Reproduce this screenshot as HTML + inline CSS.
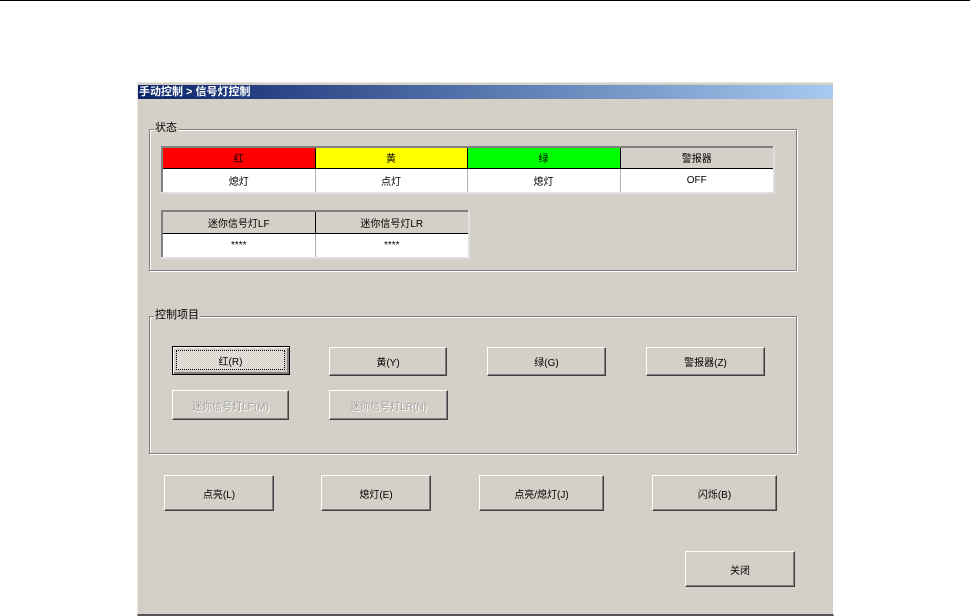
<!DOCTYPE html>
<html><head><meta charset="utf-8"><style>
*{margin:0;padding:0;box-sizing:border-box}
body{width:970px;height:616px;background:#fff;position:relative;overflow:hidden;font-family:"Liberation Sans","WenQuanYi Zen Hei","Noto Sans CJK SC",sans-serif;font-size:11px;color:#000}
.abs{position:absolute}
#topline{left:0;top:0;width:970px;height:1px;background:#000}
#win{left:137px;top:82px;width:697px;height:534px;background:#d4d0c8;border-top:1px solid #e8e6e0;border-left:1px solid #e8e6e0;border-right:1px solid #fff;border-bottom:2px solid #555}
#title{left:138px;top:85px;width:695px;height:14px;background:linear-gradient(90deg,#0a246a,#a6caf0);color:#fff;font-weight:bold;font-size:11px;line-height:14px;padding-left:1px}
.grp{border:1px solid #808080;box-shadow:1px 1px 0 #fff inset,1px 1px 0 #fff}
.lbl{background:#d4d0c8;padding:0 1px;line-height:12px}
table{border-collapse:collapse;position:absolute;background:#fff;border:2px solid #808080;border-right-color:#e0e0e0;border-bottom-color:#e0e0e0}
td{border:1px solid #000;text-align:center;font-size:10px}
td.d{border-color:#b0b0b0;border-top:none}
.btn{position:absolute;background:#d4d0c8;border:1px solid;border-color:#fff #404040 #404040 #fff;box-shadow:inset -1px -1px 0 #808080;text-align:center;font-size:10px;display:flex;align-items:center;justify-content:center}
.dis{color:#a0a0a0;text-shadow:1px 1px 0 #fff}
.focus{position:absolute;left:3px;top:3px;right:4px;bottom:4px;border:1px dotted #000;background-image:repeating-conic-gradient(#e8e6e0 0 25%,#d4d0c8 0 50%);background-size:2px 2px;display:flex;align-items:center;justify-content:center}
</style></head><body>
<div id="topline" class="abs"></div>
<div id="win" class="abs"></div>
<div id="title" class="abs">手动控制 &gt; 信号灯控制</div>

<div class="abs grp" style="left:149px;top:129px;width:648px;height:142px"></div>
<div class="abs lbl" style="left:154px;top:122px">状态</div>
<table style="left:161px;top:146px;width:614px;height:48px">
<tr style="height:21px"><td style="background:#f00;width:153px">红</td><td style="background:#ff0;width:152px">黄</td><td style="background:#0f0;width:153px">绿</td><td style="background:#d4d0c8">警报器</td></tr>
<tr><td class="d">熄灯</td><td class="d">点灯</td><td class="d">熄灯</td><td class="d">OFF</td></tr>
</table>
<table style="left:161px;top:210px;width:309px;height:49px">
<tr style="height:22px"><td style="background:#d4d0c8;width:153px">迷你信号灯LF</td><td style="background:#d4d0c8">迷你信号灯LR</td></tr>
<tr><td class="d">****</td><td class="d">****</td></tr>
</table>

<div class="abs grp" style="left:149px;top:316px;width:648px;height:138px"></div>
<div class="abs lbl" style="left:154px;top:309px">控制项目</div>
<div class="btn" style="left:172px;top:346px;width:118px;height:29px;border-color:#000;box-shadow:inset 1px 1px 0 #fff,inset -2px -2px 0 #808080"><div class="focus">红(R)</div></div>
<div class="btn" style="left:329px;top:347px;width:118px;height:29px">黄(Y)</div>
<div class="btn" style="left:487px;top:347px;width:119px;height:29px">绿(G)</div>
<div class="btn" style="left:646px;top:347px;width:119px;height:29px">警报器(Z)</div>
<div class="btn dis" style="left:172px;top:390px;width:117px;height:30px">迷你信号灯LF(M)</div>
<div class="btn dis" style="left:329px;top:390px;width:119px;height:30px">迷你信号灯LR(N)</div>

<div class="btn" style="left:164px;top:475px;width:110px;height:36px">点亮(L)</div>
<div class="btn" style="left:321px;top:475px;width:110px;height:36px">熄灯(E)</div>
<div class="btn" style="left:479px;top:475px;width:125px;height:36px">点亮/熄灯(J)</div>
<div class="btn" style="left:652px;top:475px;width:125px;height:36px">闪烁(B)</div>
<div class="btn" style="left:685px;top:551px;width:110px;height:36px">关闭</div>
</body></html>
